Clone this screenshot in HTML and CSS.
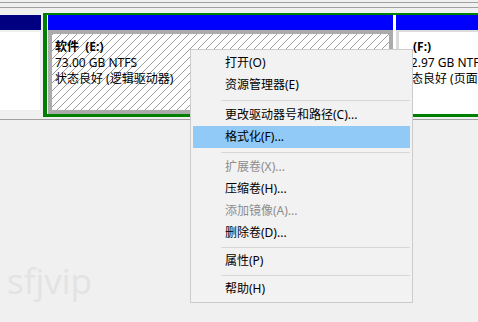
FILE: index.html
```html
<!DOCTYPE html>
<html lang="zh-CN">
<head>
<meta charset="utf-8">
<title>磁盘管理</title>
<link rel="stylesheet" href="styles.css">
</head>
<body>
<div class="top"><div class="rule"></div><div class="rule"></div></div>
<div class="disk">
  <div class="prim">
    <div class="pbar"></div>
    <div class="pbody"></div>
  </div>
  <div class="ext">
    <div class="vol vol-e">
      <div class="vbar"></div>
      <div class="vbody">
        <div class="label">软件&nbsp; (E:)</div>
        <div>73.00 GB NTFS</div>
        <div>状态良好 (逻辑驱动器)</div>
      </div>
    </div>
    <div class="vol vol-f">
      <div class="vbar"></div>
      <div class="vbody">
        <div class="label ind-l">(F:)</div>
        <div class="ind-s">12.97 GB NTFS</div>
        <div>状态良好 (页面文件, 逻辑驱动器)</div>
      </div>
    </div>
  </div>
</div>
<div class="base"></div>

<div class="wm">sfjvip</div>

<div class="menu">
  <div class="item">打开(O)</div>
  <div class="item">资源管理器(E)</div>
  <div class="sep"></div>
  <div class="item">更改驱动器号和路径(C)...</div>
  <div class="item active">格式化(F)...</div>
  <div class="sep"></div>
  <div class="item off">扩展卷(X)...</div>
  <div class="item">压缩卷(H)...</div>
  <div class="item off">添加镜像(A)...</div>
  <div class="item">删除卷(D)...</div>
  <div class="sep sm"></div>
  <div class="item">属性(P)</div>
  <div class="sep sm"></div>
  <div class="item">帮助(H)</div>
</div>
</body>
</html>
```
FILE: styles.css
```css
* { box-sizing: border-box; }
html, body { margin: 0; }
body {
  width: 478px;
  height: 322px;
  overflow: hidden;
  position: relative;
  background: #f0f0f0;
  font: 12px "Noto Sans", "Noto Sans CJK SC", sans-serif;
  color: #000;
}
.top { height: 13px; padding-top: 2px; }
.rule { height: 1px; background: #a0a0a0; }
.rule + .rule { margin-top: 4px; }

.disk { display: flex; height: 104px; }
.prim { width: 43px; padding-top: 2px; display: flex; flex-direction: column; }
.pbar { width: 41px; height: 15px; background: #000080; }
.pbody { margin-top: 2px; width: 40px; height: 78px; background: #fff; }

.ext {
  flex: 1;
  display: flex;
  min-width: 0;
  border: solid #008000;
  border-width: 2px 0 3px 4px;
  background: #fff;
  padding-left: 1px;
}
.vol { display: flex; flex-direction: column; min-width: 0; }
.vol-e { width: 345px; flex: none; }
.vol-f { flex: 1; margin-left: 3px; }
.vbar { height: 15px; background: #0000ff; flex: none; }
.vbody { flex: 1; line-height: 16px; white-space: nowrap; overflow: hidden; }
.vol-e .vbody {
  border: 4px solid #ababab;
  padding: 5px 0 0 3px;
  background: repeating-linear-gradient(135deg, #9c9c9c 0 0.9px, #ffffff 0.9px 5.657px);
}
.vol-f .vbody {
  border: solid #dcdcdc;
  border-width: 2px 0 0 3px;
  padding: 7px 0 0 0;
}
.label { font-weight: bold; }
.ind-l { padding-left: 14px; }
.ind-s { padding-left: 5px; }

.base { margin-top: 2px; height: 1px; background: #a0a0a0; }

.wm {
  position: absolute;
  left: 7px;
  top: 263px;
  font: 35px/1 "Open Sans", sans-serif;
  color: #e3e3e3;
}

.menu {
  position: absolute;
  left: 190px;
  top: 49px;
  width: 223px;
  border: 1px solid #cccccc;
  background: #f2f2f2;
  padding: 2px;
}
.item { height: 22px; line-height: 22px; padding-left: 32px; white-space: nowrap; }
.item.active { background: #91c9f7; }
.item.off { color: #8d8d8d; }
.sep { height: 1px; background: #d7d7d7; margin: 4px 0 3px 28px; }
.sep.sm { margin: 3px 0 2px 28px; }
```
